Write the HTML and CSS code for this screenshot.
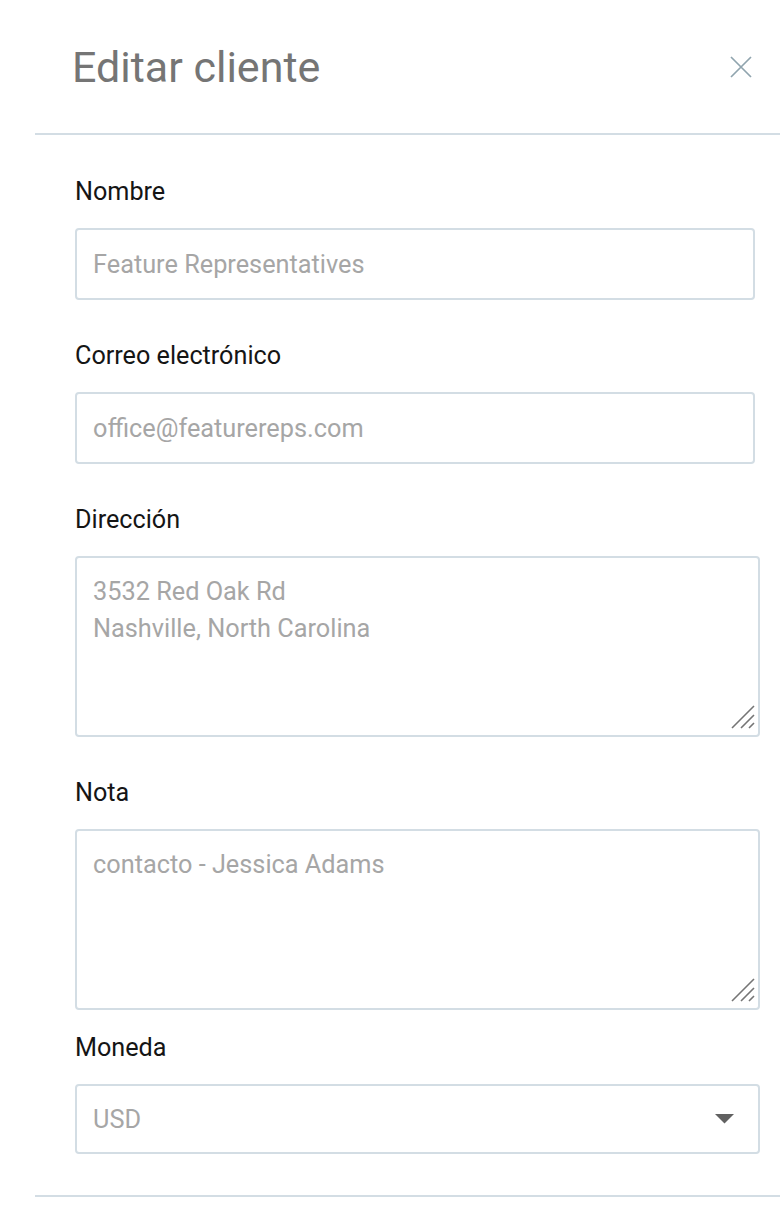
FILE: index.html
```html
<!DOCTYPE html>
<html lang="es">
<head>
<meta charset="utf-8">
<title>Editar cliente</title>
<link rel="stylesheet" href="styles.css">
</head>
<body>
<div class="panel">
  <header class="panel-header">
    <h1 class="panel-title">Editar cliente</h1>
    <button class="close-btn" type="button" aria-label="Cerrar">
      <svg width="22" height="22" viewBox="0 0 22 22"><path d="M1 1L21 21M21 1L1 21" stroke="#90a4ae" stroke-width="1.7" fill="none"/></svg>
    </button>
  </header>
  <form class="form">
    <div class="group">
      <div class="label">Nombre</div>
      <div class="control input"><span class="value">Feature Representatives</span></div>
    </div>
    <div class="group">
      <div class="label">Correo electrónico</div>
      <div class="control input"><span class="value">office@featurereps.com</span></div>
    </div>
    <div class="group">
      <div class="label">Dirección</div>
      <div class="control area"><div class="value">3532 Red Oak Rd<br>Nashville, North Carolina</div>
        <svg class="grip" width="24" height="24" viewBox="0 0 24 24"><path d="M1 23L23 1M10 23L23 10M18 23L23 18" stroke="#757575" stroke-width="1.6" fill="none"/></svg>
      </div>
    </div>
    <div class="group group-tight">
      <div class="label">Nota</div>
      <div class="control area"><div class="value">contacto - Jessica Adams</div>
        <svg class="grip" width="24" height="24" viewBox="0 0 24 24"><path d="M1 23L23 1M10 23L23 10M18 23L23 18" stroke="#757575" stroke-width="1.6" fill="none"/></svg>
      </div>
    </div>
    <div class="group">
      <div class="label">Moneda</div>
      <div class="control select"><span class="value">USD</span>
        <svg class="caret" width="19" height="10" viewBox="0 0 19 10"><path d="M0 0H19L9.5 9.5Z" fill="#616161"/></svg>
      </div>
    </div>
  </form>
</div>
</body>
</html>
```
FILE: styles.css
```css
html, body {
  margin: 0;
  padding: 0;
  background: #ffffff;
}
body {
  font-family: Roboto, "Liberation Sans", Arial, sans-serif;
  overflow: hidden;
}
.panel {
  margin-left: 35px;
  width: 760px;
}
.panel-header {
  display: flex;
  align-items: center;
  justify-content: space-between;
  padding: 42px 43px 41px 37px;
  border-bottom: 2px solid #d3dde4;
}
.panel-title {
  margin: 0;
  font-size: 43px;
  line-height: 50px;
  font-weight: 400;
  color: #757575;
}
.close-btn {
  border: 0;
  background: none;
  padding: 0;
  width: 22px;
  height: 22px;
  display: block;
}
.close-btn svg { display: block; }
.form {
  padding: 42px 0 0 40px;
  border-bottom: 2px solid #d3dde4;
  width: 720px;
}
.group {
  margin-bottom: 41px;
}
.group-tight {
  margin-bottom: 23px;
}
.label {
  font-size: 25.2px;
  line-height: 29px;
  color: #151515;
  margin-bottom: 22px;
}
.control {
  box-sizing: border-box;
  border: 2px solid #d3dde4;
  border-radius: 4px;
  font-size: 25.3px;
  color: #a6a6a6;
  position: relative;
}
.input {
  width: 680px;
  height: 72px;
  display: flex;
  align-items: center;
  padding: 0 16px;
}
.area {
  width: 685px;
  height: 181px;
  padding: 15px 16px;
  line-height: 37px;
}
.select {
  width: 685px;
  height: 70px;
  display: flex;
  align-items: center;
  justify-content: space-between;
  padding: 0 24px 0 16px;
}
.caret { display: block; }
.grip {
  position: absolute;
  right: 3px;
  bottom: 6px;
}
```
